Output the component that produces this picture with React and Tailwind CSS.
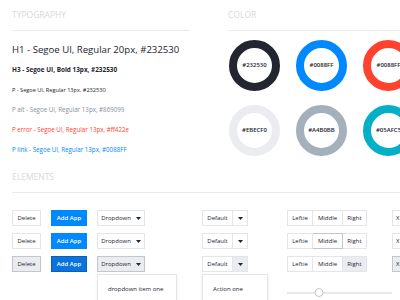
import { useState } from 'react';

const swatches = [
  { ring: 'border-[#232530]', label: '#232530' },
  { ring: 'border-[#0088FF]', label: '#0088FF' },
  { ring: 'border-[#FF422E]', label: '#0088FF' },
  { ring: 'border-[#EBECF0]', label: '#EBECF0' },
  { ring: 'border-[#A4B0BB]', label: '#A4B0BB' },
  { ring: 'border-[#05AFC5]', label: '#05AFC5' },
];

const Caret = () => (
  <svg width="5" height="3" viewBox="0 0 5 3" className="shrink-0">
    <path d="M0 0h5L2.5 3z" fill="#232530" />
  </svg>
);

const SectionTitle = ({ children }) => (
  <div className="flex h-[31px] items-center border-b border-[#ebebeb] text-[8.5px] uppercase text-[#d6d9dd]">
    {children}
  </div>
);

const ButtonRow = ({ state }) => {
  const pressed = state === 'active';
  const hover = state === 'hover';

  return (
    <div className="flex h-[16px] w-[400px] items-stretch text-[6px] text-[#232530]">
      <button
        className={`ml-[12px] w-[29px] shrink-0 border ${pressed ? 'border-[#c3c7cc] bg-[#ebecf0]' : 'border-[#e3e5e8] bg-white'}`}
      >
        Delete
      </button>
      <button
        className={`ml-[10px] w-[36px] shrink-0 border font-semibold text-white ${pressed ? 'border-[#0a5fb8] bg-[#0a73dc]' : 'border-[#0088FF] bg-[#0088FF]'}`}
      >
        Add App
      </button>
      <div className="relative ml-[10px] shrink-0">
        <button
          className={`flex h-full w-[48px] items-center justify-center gap-[5px] border ${pressed ? 'border-[#c3c7cc] bg-[#ebecf0]' : 'border-[#e3e5e8] bg-white'}`}
        >
          Dropdown <Caret />
        </button>
        {pressed && (
          <div className="absolute left-0 top-[18px] h-[40px] w-[80px] border border-[#e3e5e8] bg-white pl-[10px] pt-[10px] shadow-[0_1px_3px_rgba(0,0,0,0.08)]">
            dropdown item one
          </div>
        )}
      </div>
      <div className="relative ml-[57px] flex w-[46px] shrink-0 border border-[#e3e5e8] bg-white">
        <span className="flex w-[30px] items-center justify-center whitespace-nowrap border-r border-[#e3e5e8]">
          Default
        </span>
        <span className={`flex flex-1 items-center justify-center ${pressed ? 'bg-[#ebecf0]' : ''}`}>
          <Caret />
        </span>
        {pressed && (
          <div className="absolute -left-px top-[17px] h-[40px] w-[66px] border border-[#e3e5e8] bg-white pl-[10px] pt-[10px] shadow-[0_1px_3px_rgba(0,0,0,0.08)]">
            Action one
          </div>
        )}
      </div>
      <div className="ml-[39px] flex w-[80px] shrink-0 border border-[#e3e5e8] bg-white">
        <span className="flex w-[25px] items-center justify-center border-r border-[#e3e5e8]">Leftie</span>
        <span
          className={`flex w-[30px] items-center justify-center border-r ${hover ? '-my-px border-y border-[#c3c7cc]' : 'border-[#e3e5e8]'}`}
        >
          Middle
        </span>
        <span className={`flex flex-1 items-center justify-center ${pressed ? 'bg-[#ebecf0]' : ''}`}>Right</span>
      </div>
      <button
        className={`ml-[25px] w-[20px] shrink-0 border pl-[3px] text-left ${pressed ? 'border-[#c3c7cc] bg-[#ebecf0]' : 'border-[#e3e5e8] bg-white'}`}
      >
        X
      </button>
    </div>
  );
};

export default function App() {
  const [value] = useState(30);

  return (
    <div className="h-[300px] w-[400px] overflow-hidden bg-white font-['Open_Sans',sans-serif] text-[#232530]">
      <div className="flex pl-[12px]">
        <div className="w-[178px] shrink-0">
          <SectionTitle>Typography</SectionTitle>
          <div className="mt-[9px] whitespace-nowrap">
            <div className="h-[20px] text-[9.6px] leading-[20px]">H1 - Segoe UI, Regular 20px, #232530</div>
            <div className="h-[20px] text-[6.4px] font-bold leading-[20px]">H3 - Segoe UI, Bold 13px, #232530</div>
            <div className="h-[20px] text-[5.6px] leading-[20px]">P - Segoe UI, Regular 13px, #232530</div>
            <div className="h-[20px] text-[6.2px] leading-[20px] text-[#869099]">P alt - Segoe UI, Regular 13px, #869099</div>
            <div className="h-[20px] text-[6.2px] leading-[20px] text-[#ff422e]">P error - Segoe UI, Regular 13px, #ff422e</div>
            <div className="h-[20px] text-[6.2px] leading-[20px] text-[#0088FF]">P link - Segoe UI, Regular 13px, #0088FF</div>
          </div>
        </div>
        <div className="ml-[38px] w-[172px] shrink-0">
          <SectionTitle>Color</SectionTitle>
          <div className="mt-[9px] grid w-[240px] grid-cols-[repeat(3,51px)] gap-x-[16px] gap-y-[14px] pl-px">
            {swatches.map((s, i) => (
              <div
                key={i}
                className={`flex h-[51px] w-[51px] items-center justify-center rounded-full border-[8px] ${s.ring} text-[6px] font-semibold`}
              >
                {s.label}
              </div>
            ))}
          </div>
        </div>
      </div>

      <div className="mt-[2px] pl-[12px]">
        <SectionTitle>Elements</SectionTitle>
      </div>

      <div className="mt-[17px] flex flex-col gap-[7px]">
        <ButtonRow state="default" />
        <ButtonRow state="hover" />
        <ButtonRow state="active" />
      </div>

      <div className="relative ml-[287px] mt-[20px] h-[2px] w-[105px] bg-[#e6e8eb]">
        <div
          className="absolute top-[-4px] h-[9px] w-[9px] -translate-x-1/2 rounded-full border border-[#c3c7cc] bg-white"
          style={{ left: `${value}%` }}
        />
      </div>
    </div>
  );
}
